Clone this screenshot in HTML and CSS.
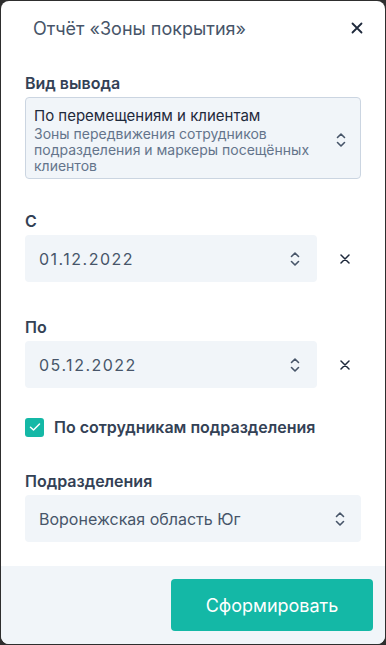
FILE: index.html
```html
<!DOCTYPE html>
<html lang="ru">
<head>
<meta charset="utf-8">
<link rel="stylesheet" href="styles.css">
</head>
<body>
<div class="modal">
  <div class="header">
    <div class="title">Отчёт «Зоны покрытия»</div>
    <button class="close">
      <svg width="12" height="12" viewBox="0 0 12 12"><path d="M1.5 1.5L10.5 10.5M10.5 1.5L1.5 10.5" stroke="#1e293b" stroke-width="1.8" stroke-linecap="round"/></svg>
    </button>
  </div>
  <div class="body">
    <div class="field">
      <div class="label">Вид вывода</div>
      <div class="select tall">
        <div class="select-text">
          <div class="main">По перемещениям и клиентам</div>
          <div class="sub">Зоны передвижения сотрудников подразделения и маркеры посещённых клиентов</div>
        </div>
        <svg class="chev" width="10" height="16" viewBox="0 0 10 16"><path d="M1.5 5.5L5 2L8.5 5.5M1.5 10.5L5 14L8.5 10.5" fill="none" stroke="#475569" stroke-width="1.6" stroke-linecap="round" stroke-linejoin="round"/></svg>
      </div>
    </div>
    <div class="field">
      <div class="label">С</div>
      <div class="date-row">
        <div class="select date">
          <div class="value">01.12.2022</div>
          <svg class="chev" width="10" height="16" viewBox="0 0 10 16"><path d="M1.5 5.5L5 2L8.5 5.5M1.5 10.5L5 14L8.5 10.5" fill="none" stroke="#475569" stroke-width="1.6" stroke-linecap="round" stroke-linejoin="round"/></svg>
        </div>
        <button class="clear"><svg width="10" height="10" viewBox="0 0 10 10"><path d="M1 1L9 9M9 1L1 9" stroke="#1e293b" stroke-width="1.5" stroke-linecap="round"/></svg></button>
      </div>
    </div>
    <div class="field">
      <div class="label">По</div>
      <div class="date-row">
        <div class="select date">
          <div class="value">05.12.2022</div>
          <svg class="chev" width="10" height="16" viewBox="0 0 10 16"><path d="M1.5 5.5L5 2L8.5 5.5M1.5 10.5L5 14L8.5 10.5" fill="none" stroke="#475569" stroke-width="1.6" stroke-linecap="round" stroke-linejoin="round"/></svg>
        </div>
        <button class="clear"><svg width="10" height="10" viewBox="0 0 10 10"><path d="M1 1L9 9M9 1L1 9" stroke="#1e293b" stroke-width="1.5" stroke-linecap="round"/></svg></button>
      </div>
    </div>
    <label class="check-row">
      <span class="checkbox"><svg width="12" height="10" viewBox="0 0 12 10"><path d="M1.5 5.2L4.5 8L10.5 2" fill="none" stroke="#fff" stroke-width="1.5" stroke-linecap="round" stroke-linejoin="round"/></svg></span>
      <span class="check-label">По сотрудникам подразделения</span>
    </label>
    <div class="field">
      <div class="label">Подразделения</div>
      <div class="select dept">
        <div class="value">Воронежская область Юг</div>
        <svg class="chev" width="10" height="16" viewBox="0 0 10 16"><path d="M1.5 5.5L5 2L8.5 5.5M1.5 10.5L5 14L8.5 10.5" fill="none" stroke="#475569" stroke-width="1.6" stroke-linecap="round" stroke-linejoin="round"/></svg>
      </div>
    </div>
  </div>
  <div class="footer">
    <button class="submit">Сформировать</button>
  </div>
</div>
</body>
</html>
```
FILE: styles.css
```css
* { box-sizing: border-box; }
html, body { margin: 0; height: 100%; }
body {
  background: #2e2e2e;
  padding: 1px;
  font-family: Inter, "Noto Sans", sans-serif;
}
.modal {
  height: 643px;
  background: #fff;
  border-radius: 8px;
  overflow: hidden;
  display: flex;
  flex-direction: column;
}
.header {
  display: flex;
  align-items: center;
  justify-content: space-between;
  padding: 0 21px 0 32px;
  height: 54px;
  flex: none;
}
.title {
  font-size: 18px;
  color: #475569;
  font-weight: 400;
}
.close {
  border: 0; background: none; padding: 0;
  width: 14px; height: 14px;
  display: flex; align-items: center; justify-content: center;
}
.body {
  flex: 1;
  padding: 18px 24px 0 24px;
  display: flex;
  flex-direction: column;
}
.field { display: flex; flex-direction: column; }
.label {
  font-size: 16px;
  font-weight: 600;
  color: #334155;
  line-height: 20px;
  margin-bottom: 4px;
}
.select {
  background: #f1f5f9;
  border-radius: 4px;
  display: flex;
  align-items: center;
  justify-content: space-between;
}
.select.tall {
  border: 1px solid #cbd5e1;
  padding: 6px 14px 3px 8px;
  height: 82px;
  margin-bottom: 32px;
}
.select-text { display: flex; flex-direction: column; }
.main {
  font-size: 15px;
  color: #1e293b;
  line-height: 20px;
}
.sub {
  font-size: 14px;
  color: #64748b;
  line-height: 16px;
}
.chev { flex: none; }
.date-row {
  display: flex;
  align-items: center;
  margin-bottom: 35px;
}
.select.date {
  width: 292px;
  height: 47px;
  padding: 0 17px 0 14px;
}
.value {
  font-size: 16px;
  color: #475569;
  letter-spacing: 1.5px;
}
.dept .value { letter-spacing: 0; }
.clear {
  border: 0; background: none; padding: 0;
  margin-left: 23px;
  width: 10px; height: 10px;
  display: flex;
}
.check-row {
  display: flex;
  align-items: center;
  margin-top: -6px;
  margin-bottom: 34px;
}
.checkbox {
  width: 19px; height: 19px;
  border-radius: 3px;
  background: #14b8a6;
  display: flex; align-items: center; justify-content: center;
  margin-right: 10px;
}
.check-label {
  font-size: 16px;
  font-weight: 600;
  color: #334155;
}
.select.dept {
  height: 47px;
  padding: 0 16px 0 14px;
}
.footer {
  height: 78px;
  background: #f1f5f9;
  display: flex;
  justify-content: flex-end;
  align-items: flex-start;
  padding: 13px 12px 0 0;
  flex: none;
}
.submit {
  width: 202px;
  height: 52px;
  border: 0;
  border-radius: 4px;
  background: #14b8a6;
  color: #fff;
  font-family: Inter, "Noto Sans", sans-serif;
  font-size: 18px;
}
```
